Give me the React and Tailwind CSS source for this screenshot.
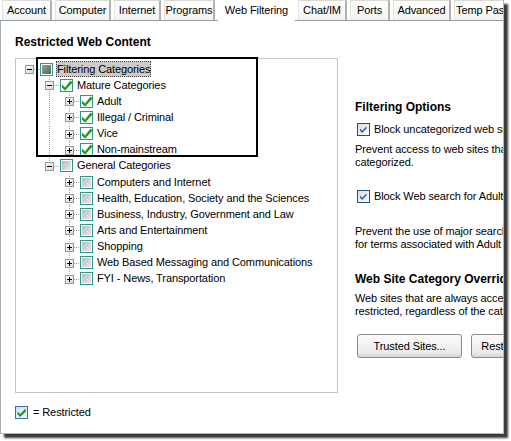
import React from 'react';

const LINE = '#a3a3a3';

// +/- box of a tree node
function ExpanderBox({ open }) {
  return (
    <g transform="translate(6 4)">
      <defs>
        <linearGradient id="expg" x1="0" y1="0" x2="1" y2="1">
          <stop offset="0" stopColor="#ffffff" />
          <stop offset="1" stopColor="#d6d6ce" />
        </linearGradient>
      </defs>
      <rect x="0.5" y="0.5" width="8" height="8" fill="url(#expg)" stroke="#8f9aa0" />
      <line x1="2" y1="4.5" x2="7" y2="4.5" stroke="#000" />
      {!open && <line x1="4.5" y1="2" x2="4.5" y2="7" stroke="#000" />}
    </g>
  );
}

// Dotted connector cell holding the expander
function Connector({ up, down, open }) {
  return (
    <svg width="20" height="16" className="block shrink-0">
      {up && <line x1="10.5" y1="0" x2="10.5" y2="8" stroke={LINE} strokeDasharray="1 1" />}
      {down && <line x1="10.5" y1="8" x2="10.5" y2="16" stroke={LINE} strokeDasharray="1 1" />}
      <line x1="11" y1="8.5" x2="20" y2="8.5" stroke={LINE} strokeDasharray="1 1" />
      <ExpanderBox open={open} />
    </svg>
  );
}

// Vertical guide for an ancestor that has more siblings below
function Guide({ on }) {
  return (
    <svg width="20" height="16" className="block shrink-0">
      {on && <line x1="10.5" y1="0" x2="10.5" y2="16" stroke={LINE} strokeDasharray="1 1" />}
    </svg>
  );
}

// Three-state tree checkbox
function TreeCheck({ state }) {
  return (
    <svg width="13" height="13" className="block shrink-0">
      <defs>
        <linearGradient id="mixg" x1="0" y1="0" x2="1" y2="1">
          <stop offset="0" stopColor="#9aa3a3" />
          <stop offset="0.55" stopColor="#6f7f78" />
          <stop offset="1" stopColor="#2e7a46" />
        </linearGradient>
        <linearGradient id="grayg" x1="0" y1="0" x2="1" y2="1">
          <stop offset="0" stopColor="#b9b9b9" />
          <stop offset="1" stopColor="#ececec" />
        </linearGradient>
      </defs>
      <rect x="0.5" y="0.5" width="12" height="12" fill="#fff" stroke="#2c978c" />
      {state === 'checked' && (
        <polygon points="2,5.5 5,8.5 10.5,1.5 12.5,3.5 5,11.8 2,8.6" fill="#1f9c1f" />
      )}
      {state === 'mixed' && <rect x="2" y="2" width="9" height="9" fill="url(#mixg)" />}
      {state === 'gray' && <rect x="2" y="2" width="9" height="9" fill="url(#grayg)" />}
    </svg>
  );
}

// Standard blue-bordered option checkbox
function OptionCheck({ green }) {
  return (
    <svg width="13" height="13" className="block shrink-0">
      <defs>
        <linearGradient id={green ? 'optg2' : 'optg'} x1="0" y1="0" x2="1" y2="1">
          <stop offset="0" stopColor={green ? '#c9dcf2' : '#dcdcd7'} />
          <stop offset="1" stopColor="#ffffff" />
        </linearGradient>
      </defs>
      <rect x="0.5" y="0.5" width="12" height="12" fill={`url(#${green ? 'optg2' : 'optg'})`} stroke={green ? '#3d6fb0' : '#1c5180'} />
      <polygon
        points={green ? '2.5,5.5 5.2,8 10.5,2.5 11,5.5 5.2,11 2.5,8.3' : '3,5.5 5.2,7.7 9.5,3.2 9.5,5.6 5.2,10 3,7.8'}
        fill={green ? '#1f9c1f' : '#3a5cc6'}
      />
    </svg>
  );
}

const tree = [
  { lv: 0, guides: [], up: false, down: false, open: true, box: 'mixed', label: 'Filtering Categories', sel: true },
  { lv: 1, guides: [false], up: true, down: true, open: true, box: 'checked', label: 'Mature Categories' },
  { lv: 2, guides: [false, true], up: true, down: true, open: false, box: 'checked', label: 'Adult' },
  { lv: 2, guides: [false, true], up: true, down: true, open: false, box: 'checked', label: 'Illegal / Criminal' },
  { lv: 2, guides: [false, true], up: true, down: true, open: false, box: 'checked', label: 'Vice' },
  { lv: 2, guides: [false, true], up: true, down: false, open: false, box: 'checked', label: 'Non-mainstream' },
  { lv: 1, guides: [false], up: true, down: false, open: true, box: 'gray', label: 'General Categories' },
  { lv: 2, guides: [false, false], up: true, down: true, open: false, box: 'gray', label: 'Computers and Internet' },
  { lv: 2, guides: [false, false], up: true, down: true, open: false, box: 'gray', label: 'Health, Education, Society and the Sciences' },
  { lv: 2, guides: [false, false], up: true, down: true, open: false, box: 'gray', label: 'Business, Industry, Government and Law' },
  { lv: 2, guides: [false, false], up: true, down: true, open: false, box: 'gray', label: 'Arts and Entertainment' },
  { lv: 2, guides: [false, false], up: true, down: true, open: false, box: 'gray', label: 'Shopping' },
  { lv: 2, guides: [false, false], up: true, down: true, open: false, box: 'gray', label: 'Web Based Messaging and Communications' },
  { lv: 2, guides: [false, false], up: true, down: false, open: false, box: 'gray', label: 'FYI - News, Transportation' },
];

const tabs = [
  { label: 'Account', w: 'w-[50px]' },
  { label: 'Computer', w: 'w-[56px]' },
  { label: 'Internet', w: 'w-[47px]' },
  { label: 'Programs', w: 'w-[51px]' },
  { label: 'Web Filtering', w: 'w-[77px]', active: true },
  { label: 'Chat/IM', w: 'w-[49px]' },
  { label: 'Ports', w: 'w-[40px]' },
  { label: 'Advanced', w: 'w-[58px]' },
  { label: 'Temp Passes', w: 'w-[70px]' },
];

function XpButton({ children }) {
  return (
    <div className="flex h-[24px] w-[105px] shrink-0 items-center justify-center rounded-[3px] border border-[#8a8a8a] bg-[linear-gradient(#fbfbfb,#ebebeb_80%,#d6d6d6)] whitespace-nowrap">
      {children}
    </div>
  );
}

export default function App() {
  return (
    <div className="h-[441px] w-[511px] overflow-hidden bg-white font-['Liberation_Sans',Arial,sans-serif] text-[11px] leading-[13px] tracking-[-0.1px] text-black">
      <div className="flex h-[434px] w-[504px] flex-col overflow-hidden border-r border-b border-[#b5b5b5] bg-white shadow-[4px_4px_2px_rgba(25,25,25,0.85)]">
        {/* tab strip */}
        <div className="flex h-[21px] shrink-0 items-end gap-[3px] border-b border-[#8f9bab] pl-[2px]">
          {tabs.map((t) =>
            t.active ? (
              <div key={t.label} className={`${t.w} -mb-px flex h-[21px] shrink-0 items-center justify-center bg-white whitespace-nowrap`}>
                {t.label}
              </div>
            ) : (
              <div
                key={t.label}
                className={`${t.w} flex h-[20px] shrink-0 items-center justify-center overflow-hidden border-t border-l border-r-2 border-t-[#d9d9d4] border-l-[#e4e4de] border-r-[#b2b2aa] bg-[linear-gradient(#ffffff,#f3f3ef)] whitespace-nowrap`}
              >
                {t.label}
              </div>
            )
          )}
        </div>

        {/* page body */}
        <div className="flex flex-1 flex-col border-l border-[#a7aeb8] pl-[14px]">
          <div className="flex">
            <div className="w-[323px] shrink-0">
              <div className="mt-[14px] text-[12px] font-bold leading-[14px] tracking-normal">Restricted Web Content</div>
              <div className="relative mt-[9px] h-[335px] border border-[#c5c5c5] pt-[2px] pl-[3px]">
                {tree.map((r) => (
                  <div key={r.label} className="flex h-[16.15px] items-center">
                    {r.lv > 0 && r.guides.map((g, i) => <Guide key={i} on={g} />)}
                    <Connector up={r.up} down={r.down} open={r.open} />
                    <div className="ml-px">
                      <TreeCheck state={r.box} />
                    </div>
                    {r.sel ? (
                      <span className="ml-[3px] flex h-[16px] items-center bg-[#cbcbcb] px-px outline-1 outline-dotted outline-[#444] -outline-offset-1 whitespace-nowrap">
                        {r.label}
                      </span>
                    ) : (
                      <span className="ml-[4px] whitespace-nowrap">{r.label}</span>
                    )}
                  </div>
                ))}
                {/* highlight frame drawn over the mature group */}
                <div className="pointer-events-none absolute top-[-2px] left-[20px] h-[100px] w-[222px] border-2 border-black" />
              </div>
            </div>

            <div className="ml-[17px] flex flex-col whitespace-nowrap">
              <div className="mt-[79px] text-[12px] font-bold leading-[14px] tracking-normal">Filtering Options</div>
              <div className="mt-[9px] ml-[2px] flex items-center gap-[4px]">
                <OptionCheck />
                <span>Block uncategorized web sites</span>
              </div>
              <div className="mt-[7px]">Prevent access to web sites that have not been</div>
              <div>categorized.</div>
              <div className="mt-[21px] ml-[2px] flex items-center gap-[4px]">
                <OptionCheck />
                <span>Block Web search for Adult, Illegal / Criminal</span>
              </div>
              <div className="mt-[22px]">Prevent the use of major search engines to search</div>
              <div>for terms associated with Adult content.</div>
              <div className="mt-[21px] text-[12px] font-bold leading-[14px] tracking-normal">Web Site Category Overrides</div>
              <div className="mt-[6px]">Web sites that are always accessible or always</div>
              <div>restricted, regardless of the category.</div>
              <div className="mt-[16px] ml-[2px] flex gap-[9px]">
                <XpButton>Trusted Sites...</XpButton>
                <XpButton>Restricted Sites...</XpButton>
              </div>
            </div>
          </div>

          <div className="mt-[13px] flex items-center gap-[5px]">
            <OptionCheck green />
            <span>= Restricted</span>
          </div>
        </div>
      </div>
    </div>
  );
}
